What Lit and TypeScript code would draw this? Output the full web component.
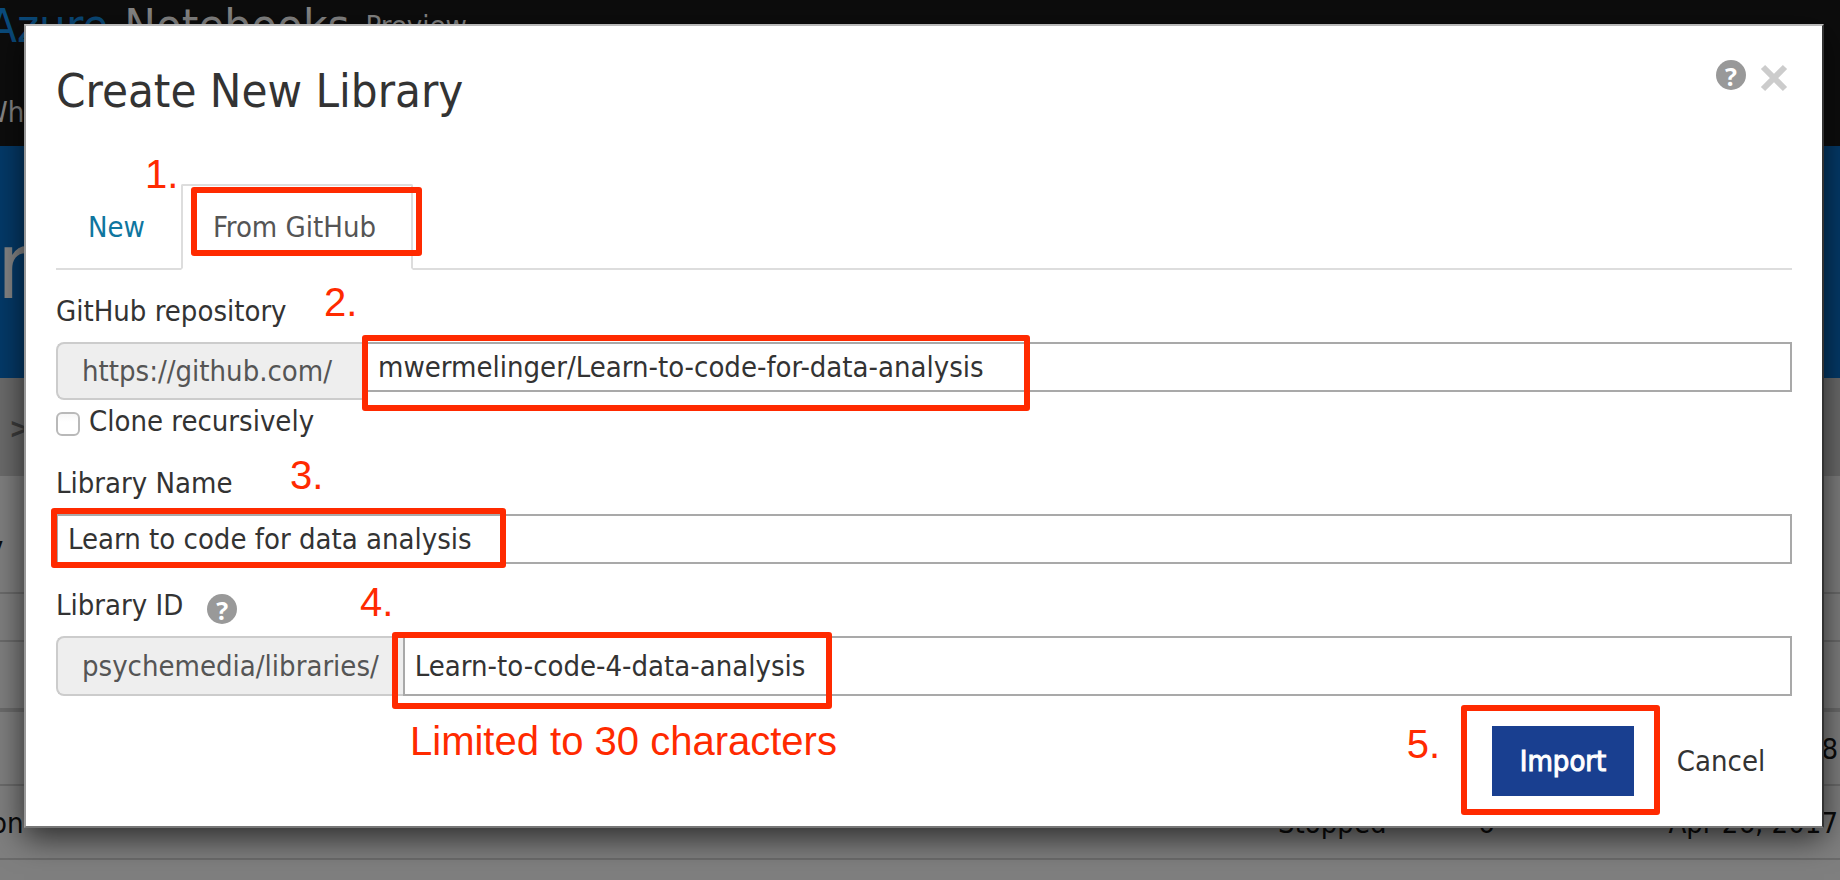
import { LitElement, html, css } from "lit";
import { customElement, property } from "lit/decorators.js";
import { styleMap } from "lit/directives/style-map.js";

type Mark = { left?: number; right?: number; top: number; width?: number; height?: number; text?: string };

/* Outlines drawn round the controls the reader has to fill in. */
const frames: Mark[] = [
  { left: 191, top: 187, width: 231, height: 69 },
  { left: 362, top: 335, width: 668, height: 76 },
  { left: 51, top: 508, width: 455, height: 60 },
  { left: 392, top: 632, width: 440, height: 77 },
  { right: 180, top: 705, width: 199, height: 110 },
];

/* Step numbers and hints beside the outlines. */
const notes: Mark[] = [
  { left: 145, top: 152, text: "1." },
  { left: 324, top: 280, text: "2." },
  { left: 290, top: 453, text: "3." },
  { left: 360, top: 580, text: "4." },
  { left: 410, top: 719, text: "Limited to 30 characters" },
  { right: 400, top: 722, text: "5." },
];

@customElement("help-button")
class HelpButton extends LitElement {
  static styles = css`
    :host { display: flex; }
    .help {
      width: 30px; height: 30px; padding: 0; border: 0; border-radius: 50%;
      background: #999; color: #fff;
      font: bold 25px/32px "Open Sans", sans-serif;
    }
  `;
  @property() label = "Help";
  render() {
    return html`<button class="help" type="button" title=${this.label}>?</button>`;
  }
}

@customElement("library-page")
class LibraryPage extends LitElement {
  static styles = css`
    :host { display: flex; flex-direction: column; height: 100%; background: #7f7f7f; color: #0b0b0b; }
    .top { height: 146px; background: #0d0d0d; color: #868686; display: flex; flex-direction: column; gap: 42px; box-sizing: border-box; }
    .brand { display: flex; align-items: center; gap: 16px; height: 52px; margin-left: -12px; font-size: 47px; line-height: 52px; }
    .azure { color: #0a4b7c; }
    .preview { font-size: 29px; }
    .nav { margin-left: -18px; line-height: 36px; }
    .hero { height: 232px; padding-top: 60px; box-sizing: border-box; background: #043a69; color: #868686; font-size: 93px; line-height: 120px; }
    .hero span { margin-left: -3px; }
    .crumbs { height: 98px; line-height: 100px; padding-left: 9px; box-sizing: border-box; background: #6b6b6b; color: #3d3d3d; font-weight: bold; }
    .row {
      display: grid; grid-template-columns: 1fr 200px 180px 182px;
      height: 74px; line-height: 72px; padding-top: 1px; box-sizing: border-box; border-bottom: 2px solid #6b6b6b;
    }
    .row :first-child { margin-left: -9px; }
    .date { text-align: right; padding-right: 2px; white-space: nowrap; }
    .heading { height: 118px; line-height: 140px; font-weight: bold; }
    .heading :first-child { margin-left: -14px; }
    .filter { height: 48px; }
    .rule { height: 70px; border-bottom-width: 4px; }
  `;
  render() {
    return html`
      <div class="top">
        <div class="brand"><span class="azure">Azure</span><span>Notebooks</span><span class="preview">Preview</span></div>
        <div class="nav">Wh</div>
      </div>
      <div class="hero"><span>n</span></div>
      <div class="crumbs">&gt;</div>
      <div class="row heading"><span>y</span></div>
      <div class="row filter"></div>
      <div class="row rule"></div>
      <div class="row"><span></span><span></span><span></span><span class="date">18</span></div>
      <div class="row"><span>on</span><span>Stopped</span><span>6</span><span class="date">Apr 26, 2017</span></div>
    `;
  }
}

@customElement("create-library-dialog")
class CreateLibraryDialog extends LitElement {
  static styles = css`
    :host { display: block; }
    .dialog {
      border: 2px solid; border-color: #b8b8b8 #333 #777 #999;
      background: #fff; color: #333; padding: 34px 30px 30px;
      box-shadow: 0 10px 30px rgba(0, 0, 0, 0.65);
    }
    button, input { font: inherit; color: inherit; }
    .header { display: flex; align-items: flex-start; gap: 14px; margin-bottom: 64px; padding-right: 4px; }
    h1 { flex: 1; margin: 3px 0 1px; font-size: 47px; line-height: 56px; font-weight: 400; }
    .close { width: 28px; height: 28px; margin-top: 4px; padding: 0; border: 0; background: none; display: flex; }
    .tabs { display: flex; gap: 4px; border-bottom: 2px solid #ddd; }
    .tab {
      margin-bottom: -2px; padding: 22px 30px; border: 2px solid transparent;
      line-height: 38px; background: none; color: #0f769f; text-align: left;
    }
    .tab.active { min-width: 232px; border-color: #ddd; border-bottom-color: #fff; background: #fff; color: #555; border-radius: 2px 2px 0 0; }
    form { display: flex; flex-direction: column; gap: 22px; padding-top: 22px; }
    .label-row { display: flex; align-items: flex-end; gap: 24px; margin-bottom: 12px; }
    label { line-height: 38px; }
    .group { display: flex; align-items: flex-start; }
    .addon {
      min-width: 310px; box-sizing: border-box; padding: 0 24px; border: 2px solid #ccc; border-right: 0; border-radius: 8px 0 0 8px;
      background: #eee; color: #555; line-height: 54px;
    }
    .text {
      flex: 1; min-width: 0; width: 100%; height: 50px; box-sizing: border-box; padding: 0 10px;
      border: 2px solid #a9a9a9; border-radius: 0; background: #fff; display: block;
    }
    .group.tall .text { height: 60px; }
    .group.tall .addon { line-height: 56px; }
    .check { display: flex; align-items: flex-start; gap: 9px; height: 40px; margin-top: 2px; }
    .box {
      appearance: none; width: 24px; height: 24px; margin: 10px 0 0; box-sizing: border-box;
      border: 2px solid #b9b9b9; border-radius: 6px; background: linear-gradient(#f6f6f6, #fff 40%);
    }
    .footer { display: flex; justify-content: flex-end; gap: 16px; padding-top: 8px; }
    .action { min-width: 142px; height: 70px; padding: 0 20px; border: 0; background: none; }
    .primary { background: #193f90; color: #fff; -webkit-text-stroke: 1px #fff; }
  `;
  render() {
    return html`
      <section class="dialog" role="dialog" aria-labelledby="title">
        <header class="header">
          <h1 id="title">Create New Library</h1>
          <help-button></help-button>
          <button class="close" type="button" aria-label="Close">
            <svg width="28" height="28" viewBox="0 0 28 28"><path d="M3 3L25 25M25 3L3 25" stroke="#ccc" stroke-width="6" /></svg>
          </button>
        </header>
        <div class="tabs" role="tablist">
          <button class="tab" role="tab" aria-selected="false">New</button>
          <button class="tab active" role="tab" aria-selected="true">From GitHub</button>
        </div>
        <form @submit=${(e: Event) => e.preventDefault()}>
          <div>
            <div class="label-row"><label for="repo">GitHub repository</label></div>
            <div class="group">
              <span class="addon">https://github.com/</span>
              <input class="text" id="repo" type="text" value="mwermelinger/Learn-to-code-for-data-analysis" />
            </div>
            <div class="check">
              <input class="box" id="clone" type="checkbox" />
              <label for="clone">Clone recursively</label>
            </div>
          </div>
          <div>
            <div class="label-row"><label for="name">Library Name</label></div>
            <input class="text" id="name" type="text" value="Learn to code for data analysis" />
          </div>
          <div>
            <div class="label-row"><label for="lib">Library ID</label><help-button label="About the library ID"></help-button></div>
            <div class="group tall">
              <span class="addon">psychemedia/libraries/</span>
              <input class="text" id="lib" type="text" maxlength="30" value="Learn-to-code-4-data-analysis" />
            </div>
          </div>
          <div class="footer">
            <button class="action primary" type="submit">Import</button>
            <button class="action" type="button">Cancel</button>
          </div>
        </form>
      </section>
    `;
  }
}

@customElement("app-root")
class AppRoot extends LitElement {
  static styles = css`
    :host {
      display: block; position: relative; height: 100vh; overflow: hidden;
      font: 29px/40px "DejaVu Sans Condensed", "DejaVu Sans", sans-serif;
      font-stretch: condensed;
    }
    .overlay { position: absolute; inset: 0; padding: 24px 16px 24px 24px; }
    .frame { position: absolute; box-sizing: border-box; border: 6px solid #ff2a00; border-radius: 3px; pointer-events: none; }
    .note { position: absolute; color: #ff2a00; font: 40px/44px "Liberation Sans", Arial, sans-serif; white-space: nowrap; pointer-events: none; }
  `;
  private place(m: Mark) {
    const px = (n?: number) => (n === undefined ? undefined : `${n}px`);
    return styleMap({ left: px(m.left), right: px(m.right), top: px(m.top), width: px(m.width), height: px(m.height) });
  }
  render() {
    return html`
      <library-page></library-page>
      <div class="overlay"><create-library-dialog></create-library-dialog></div>
      ${frames.map((m) => html`<div class="frame" style=${this.place(m)}></div>`)}
      ${notes.map((m) => html`<div class="note" style=${this.place(m)}>${m.text}</div>`)}
    `;
  }
}
